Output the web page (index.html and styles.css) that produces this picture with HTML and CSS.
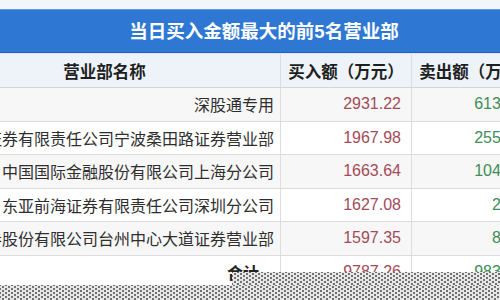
FILE: index.html
```html
<!DOCTYPE html>
<html lang="zh-CN">
<head>
    <meta charset="UTF-8">
    <title>当日买入金额最大的前5名营业部</title>
    <link rel="stylesheet" href="styles.css">
</head>
<body>
    <div class="board">
        <div class="title">当日买入金额最大的前5名营业部</div>
        <div class="row head">
            <div class="cell name">营业部名称</div>
            <div class="cell">买入额（万元）</div>
            <div class="cell">卖出额（万元）</div>
            <div class="cell"></div>
        </div>
        <div class="row">
            <div class="cell name">深股通专用</div>
            <div class="cell buy">2931.22</div>
            <div class="cell sell">6131.41</div>
            <div class="cell"></div>
        </div>
        <div class="row">
            <div class="cell name">国盛证券有限责任公司宁波桑田路证券营业部</div>
            <div class="cell buy">1967.98</div>
            <div class="cell sell">2552.60</div>
            <div class="cell"></div>
        </div>
        <div class="row">
            <div class="cell name">中国国际金融股份有限公司上海分公司</div>
            <div class="cell buy">1663.64</div>
            <div class="cell sell">1043.19</div>
            <div class="cell"></div>
        </div>
        <div class="row">
            <div class="cell name">东亚前海证券有限责任公司深圳分公司</div>
            <div class="cell buy">1627.08</div>
            <div class="cell sell">21.60</div>
            <div class="cell"></div>
        </div>
        <div class="row">
            <div class="cell name">财通证券股份有限公司台州中心大道证券营业部</div>
            <div class="cell buy">1597.35</div>
            <div class="cell sell">84.36</div>
            <div class="cell"></div>
        </div>
        <div class="row total">
            <div class="cell sum">合计</div>
            <div class="cell buy">9787.26</div>
            <div class="cell sell">9833.16</div>
            <div class="cell"></div>
        </div>
    </div>

    <!-- 图片缺失部分 -->
    <div class="missing missing-right"></div>
    <div class="missing missing-bottom"></div>
</body>
</html>
```

FILE: styles.css
```css
body {
    margin: 0;
    width: 500px;
    height: 300px;
    overflow: hidden;
    position: relative;
    background-color: #f3f6f9;
    font-family: "Liberation Sans", "Noto Sans CJK SC", sans-serif;
    color: #333;
}
.board {
    width: 670px;
    margin-left: -71px;
    padding-top: 9px;
    background-color: #fff;
    background-image: linear-gradient(#f3f6f9, #f3f6f9);
    background-size: 100% 9px;
    background-repeat: no-repeat;
}
.title {
    height: 44px;
    line-height: 43px;
    text-align: center;
    font-size: 18.5px;
    font-weight: bold;
    color: #fff;
    background-color: #2e78d4;
    border-top: 1px solid #5f9be2;
    border-bottom: 1px solid #2163b8;
    box-sizing: border-box;
}
.row {
    display: grid;
    grid-template-columns: 352px 131px 131px 56px;
    height: 33.5px;
    border-bottom: 1px solid #dcdcdc;
    box-sizing: border-box;
}
.row:nth-child(odd) {
    background-color: #f7f7f7;
}
.row.head {
    height: 35px;
    background-color: #eef3fa;
    border-top: 1px solid #dde6f2;
    border-bottom: 1px solid #cfd5dc;
}
.cell {
    display: flex;
    align-items: center;
    justify-content: flex-end;
    padding-right: 10px;
    font-size: 16px;
    white-space: nowrap;
    overflow: hidden;
    border-right: 1px solid #dddddd;
}
.cell.name {
    padding-right: 6px;
    color: #2e2e2e;
}
.head .cell {
    justify-content: center;
    padding-right: 0;
    font-size: 16.5px;
    font-weight: bold;
    color: #1e1e1e;
}
.buy {
    color: #a44a58;
}
.sell {
    color: #3f8d58;
}
.total .cell.sum {
    justify-content: flex-end;
    padding-right: 21px;
    font-weight: bold;
    color: #222;
}
.missing {
    position: absolute;
    right: 0;
    bottom: 0;
    background-color: #e7e7e7;
    background-image:
        radial-gradient(circle, #6f6f6f 0.7px, transparent 1.1px),
        radial-gradient(circle, #6f6f6f 0.7px, transparent 1.1px);
    background-size: 6px 4px, 6px 4px;
    background-position: 0 0, 3px 2px;
}
.missing-right {
    left: 232px;
    top: 272px;
}
.missing-bottom {
    left: 0;
    top: 285px;
}
```
